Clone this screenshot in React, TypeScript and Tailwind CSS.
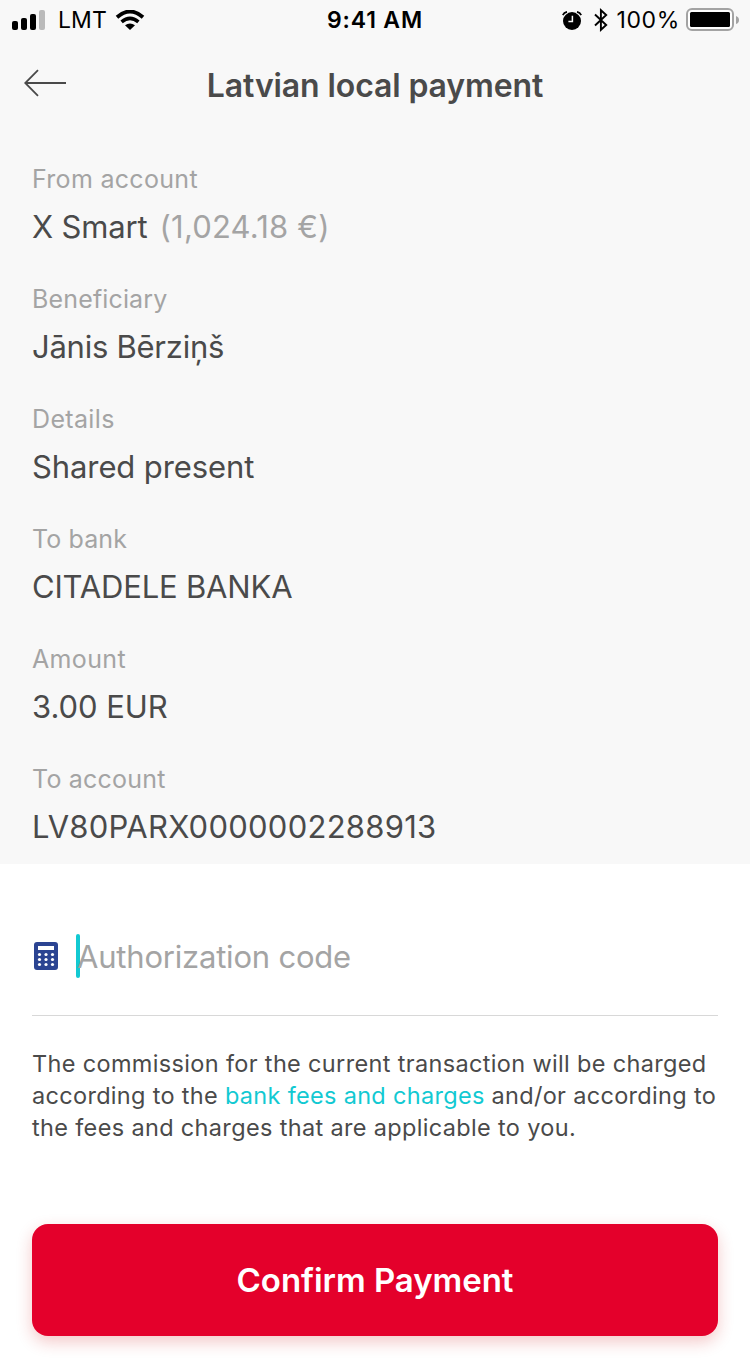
const rows = [
  { label: "From account", value: "X Smart", note: "(1,024.18 €)", labelClass: "tracking-[0.3px]", valueClass: "tracking-[-0.15px]" },
  { label: "Beneficiary", value: "Jānis Bērziņš", labelClass: "tracking-[0.15px]", valueClass: "tracking-[-0.25px]" },
  { label: "Details", value: "Shared present", labelClass: "tracking-[0.35px]", valueClass: "tracking-[-0.1px]" },
  { label: "To bank", value: "CITADELE BANKA", labelClass: "tracking-[0.1px]", valueClass: "tracking-[-0.18px]" },
  { label: "Amount", value: "3.00 EUR", labelClass: "tracking-[0.35px]", valueClass: "tracking-[-0.05px]" },
  { label: "To account", value: "LV80PARX0000002288913", labelClass: "tracking-[0.2px]", valueClass: "tracking-[0.26px]" },
];

function SignalIcon() {
  return (
    <svg width="34" height="20" viewBox="0 0 34 20" aria-hidden="true">
      <rect x="0" y="11" width="6" height="9" rx="2" />
      <rect x="9" y="8" width="6" height="12" rx="2" />
      <rect x="18" y="4" width="6" height="16" rx="2" />
      <rect x="27" y="0" width="6" height="20" rx="2" fill="#bababa" />
    </svg>
  );
}

function WifiIcon() {
  return (
    <svg width="30" height="20" viewBox="0 0 30 20" aria-hidden="true">
      <path d="M2 7.2Q15-4.2 28 7.2" fill="none" stroke="#000" strokeWidth="3.8" />
      <path d="M6.6 11.9Q15 4.9 23.4 11.9" fill="none" stroke="#000" strokeWidth="3.6" />
      <path d="M10 15.2Q15 11.6 20 15.2L15 20Z" />
    </svg>
  );
}

function AlarmIcon() {
  return (
    <svg width="20" height="19" viewBox="0 0 20 19" aria-hidden="true">
      <circle cx="10" cy="10" r="9" />
      <path d="M.8 4.2Q2 1.4 5 .8M15 .8Q18 1.4 19.2 4.2" fill="none" stroke="#f8f8f8" strokeWidth="4" />
      <path d="M.8 4.2Q2 1.4 5 .8M15 .8Q18 1.4 19.2 4.2" fill="none" stroke="#000" strokeWidth="1.7" />
      <path d="M10.4 4.8V10.6H6.4" fill="none" stroke="#f8f8f8" strokeWidth="1.5" />
    </svg>
  );
}

function BluetoothIcon() {
  return (
    <svg width="14" height="24" viewBox="0 0 14 24" aria-hidden="true">
      <path d="M1 6.5L12.2 17L6.9 21.8V2.2L12.2 7L1 17.5" fill="none" stroke="#000" strokeWidth="1.9" />
    </svg>
  );
}

function BatteryIcon() {
  return (
    <svg width="54" height="24" viewBox="0 0 54 24" aria-hidden="true">
      <rect x="1" y="1" width="46" height="21" rx="5" fill="#fff" stroke="#a3a3a3" strokeWidth="2" />
      <rect x="4" y="4" width="40" height="15" rx="1.5" />
      <path d="M50 8Q53 9 53 12T50 16Z" fill="#a3a3a3" />
    </svg>
  );
}

function CalculatorIcon() {
  return (
    <svg width="24" height="28" viewBox="0 0 24 28" aria-hidden="true">
      <rect width="24" height="28" rx="3" fill="#2b4492" />
      <rect x="4" y="4" width="16" height="4" fill="#fff" />
      {[12.5, 17.5, 22.5].map((y) =>
        [5.5, 12, 18.5].map((x) => <circle key={`${x}-${y}`} cx={x} cy={y} r="1.6" fill="#fff" />),
      )}
    </svg>
  );
}

export default function App() {
  return (
    <main className="flex h-[1368px] w-[750px] flex-col overflow-hidden bg-white font-['Inter',sans-serif] text-[#4a4a4a]">
      <section className="h-[864px] bg-[#f8f8f8]">
        <div className="grid h-10 grid-cols-3 items-center pl-3 pr-[10px] text-[23px] leading-none text-black">
          <div className="flex items-center">
            <SignalIcon />
            <span className="ml-3 tracking-[0.1px]">LMT</span>
            <span className="ml-2"><WifiIcon /></span>
          </div>
          <div className="pr-[2px] text-center font-semibold tracking-[0.85px]">9:41 AM</div>
          <div className="flex items-center justify-end whitespace-nowrap">
            <AlarmIcon />
            <span className="ml-3"><BluetoothIcon /></span>
            <span className="ml-2 mr-[6px] tracking-[0.65px]">100%</span>
            <BatteryIcon />
          </div>
        </div>
        <header className="grid h-[90px] grid-cols-[1fr_auto_1fr] items-center px-6">
          <button aria-label="Back" className="mb-1 w-[42px]">
            <svg width="42" height="28" viewBox="0 0 42 28" fill="none" stroke="#4a4a4a" strokeWidth="1.8">
              <path d="M14 1.2L1.2 14L14 26.8M1.2 14H42" />
            </svg>
          </button>
          <h1 className="pt-[2px] text-[32px] font-semibold leading-10 tracking-[-0.12px]">Latvian local payment</h1>
        </header>
        <dl className="px-8 pt-[33px]">
          {rows.map((row) => (
            <div key={row.label} className="h-[120px]">
              <dt className={`text-[25px] leading-8 text-[#a4a4a4] ${row.labelClass}`}>{row.label}</dt>
              <dd className={`mt-3 text-[31px] leading-10 ${row.valueClass}`}>
                {row.value}
                {row.note && <span className="ml-3 tracking-[0.2px] text-[#a4a4a4]">{row.note}</span>}
              </dd>
            </div>
          ))}
        </dl>
      </section>
      <section className="flex flex-1 flex-col px-8">
        <div className="flex h-[152px] items-center border-b border-[#d8d8d8] pt-8">
          <div className="ml-[2px]"><CalculatorIcon /></div>
          <div className="ml-[18px] h-11 w-1 rounded-full bg-[#12c9d2]" />
          <span className="relative -ml-[3px] pt-[2px] text-[31px] leading-10 tracking-[-0.2px] text-[#a4a4a4]">Authorization code</span>
        </div>
        <p className="mt-8 whitespace-nowrap text-[23.5px] leading-8 tracking-[0.34px]">
          The commission for the current transaction will be charged<br />
          <span className="tracking-[0.31px]">according to the <a className="text-[#12c9d2]">bank fees and charges</a> and/or according to</span><br />
          the fees and charges that are applicable to you.
        </p>
        <button className="mb-8 mt-auto h-28 w-full rounded-2xl bg-[#e4002b] pt-[2px] text-[33px] font-semibold tracking-[-0.05px] text-white shadow-[0_6px_16px_rgba(210,30,30,0.24)]">
          Confirm Payment
        </button>
      </section>
    </main>
  );
}
